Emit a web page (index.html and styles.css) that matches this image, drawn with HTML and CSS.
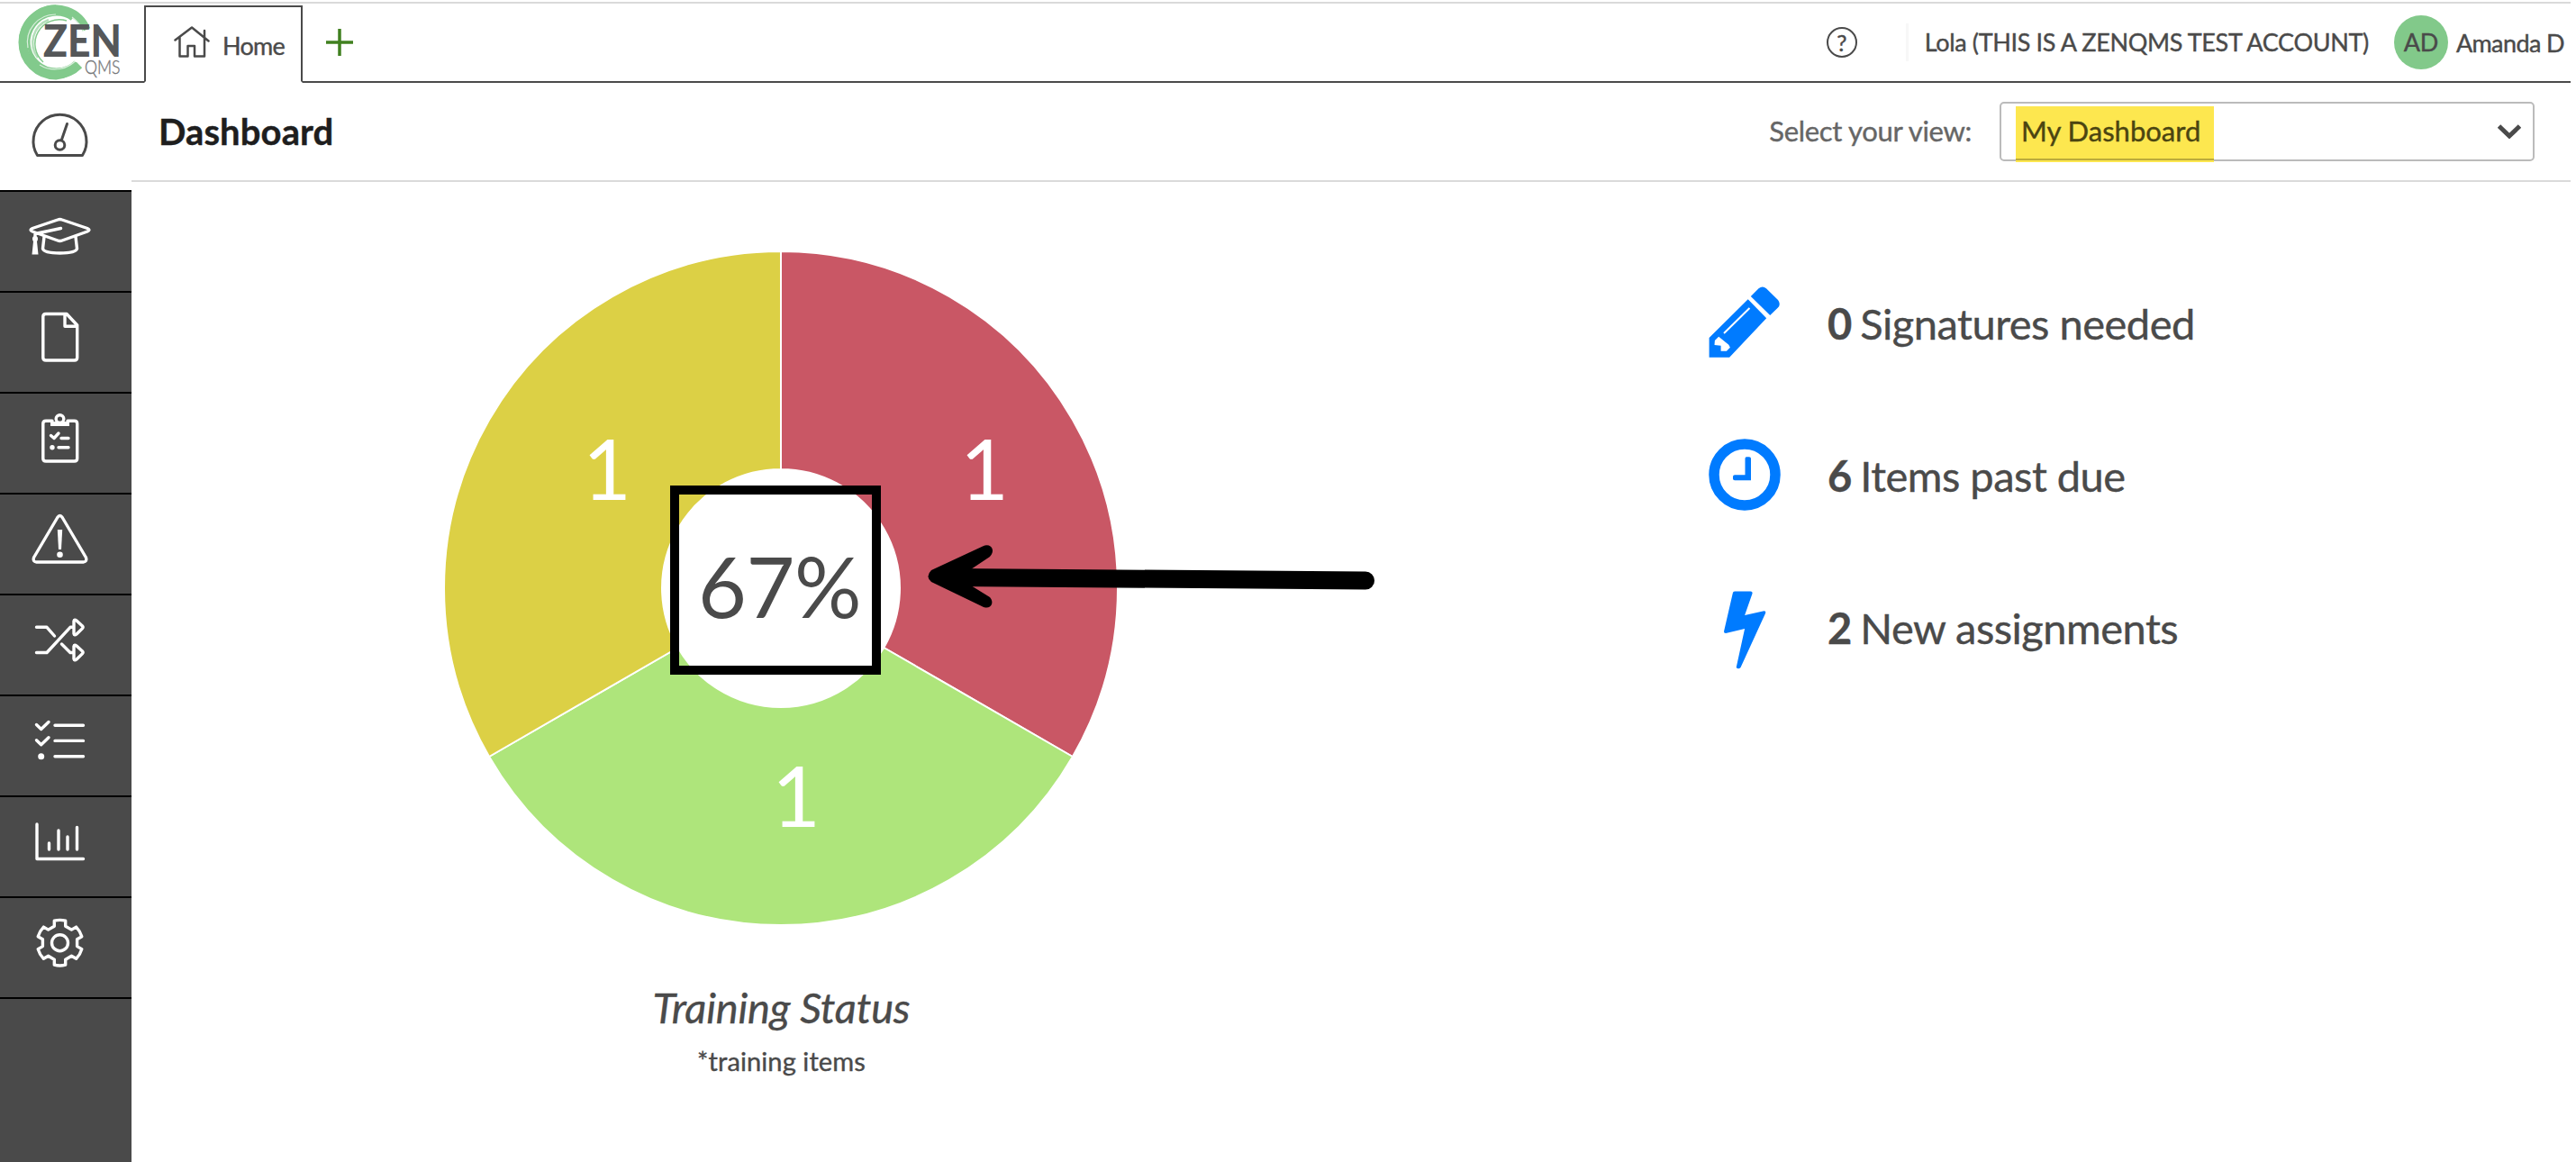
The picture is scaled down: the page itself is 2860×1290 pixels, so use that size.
FILE: index.html
```html
<!DOCTYPE html>
<html lang="en">
<head>
<meta charset="utf-8">
<title>Dashboard</title>
<link rel="stylesheet" href="styles.css">
</head>
<body>
<header class="topbar">
	<svg class="logo" viewBox="0 0 160 86">
		<path class="brush" d="M96 29A36.500 36.500 0 1 0 88 68" stroke-width="9"/>
		<path class="brush" d="M62 6A37 37 0 0 0 62 80A37 37 0 0 0 84 70" stroke-width="9"/>
		<path class="brush" d="M80 17A31 31 0 1 0 84 65" stroke-width="4"/>
		<path class="brush" d="M74 19A27 27 0 0 0 48 65" stroke-width="1.500"/>
		<path class="brush" d="M54 18A27 27 0 0 0 42 60" stroke-width="2.500" opacity=".6"/>
		<path class="brush-gap" d="M31 49A31 31 0 0 1 62 12M44 68A32 32 0 0 0 86 61M80 15Q89 22 93 31"/>
		<text class="zen" x="48" y="59" textLength="87" lengthAdjust="spacingAndGlyphs">ZEN</text>
		<text class="qms" x="94" y="78" textLength="39.500" lengthAdjust="spacingAndGlyphs">QMS</text>
	</svg>
	<div class="tab">
		<svg class="home-icon" viewBox="0 0 40 36"><path d="M1.500 15.500L20 1.500L38.500 16.500M6.500 12.500V33.500H15.500V22H23V33.500H34V12.500M34 5V12"/></svg>
		<span>Home</span>
	</div>
	<svg class="plus" viewBox="0 0 30 30"><path d="M0 15H30M15 0V30"/></svg>
	<div class="user">
		<span class="help">?</span>
		<span class="account">Lola (THIS IS A ZENQMS TEST ACCOUNT)</span>
		<span class="avatar">AD</span>
		<span class="name">Amanda D</span>
	</div>
</header>

<div class="page">
	<nav class="sidebar">
		<a class="item active">
			<svg viewBox="0 0 146 119"><path d="M41.500 80.500H91.500A29.500 29.500 0 1 0 41.500 80.500Z"/><circle cx="66.500" cy="69" r="5.300"/><path d="M68.500 63L74.500 45.500"/></svg>
		</a>
		<a class="item">
			<svg viewBox="0 0 146 110"><path d="M64 31Q66.500 30 69 31L97 40.500Q101 42.200 97 44L69 54Q66.500 55 64 54L36 44Q32 42.200 36 40.500ZM67.500 40.500L39 46.500V50M49 50L47.500 63Q49 68 66.500 68T85.500 63L84 50"/><path class="solid" d="M36 52A3 3 0 0 1 42 52Q42 54 41 55L42.500 69.500H35.500L37 55Q36 54 36 52Z"/></svg>
		</a>
		<a class="item">
			<svg viewBox="0 0 146 110"><path d="M51 23.500H74L85.700 36V72Q85.700 75 82.500 75H51Q47.800 75 47.800 72V26.500Q47.800 23.500 51 23.500ZM72 24V37.300H85"/></svg>
		</a>
		<a class="item">
			<svg viewBox="0 0 146 110"><path d="M58 30.300H51Q47.800 30.300 47.800 33.300V72Q47.800 75 51 75H82.500Q85.700 75 85.700 72V33.300Q85.700 30.300 82.500 30.300H75"/><circle cx="66.500" cy="28" r="4.300"/><path class="solid" d="M56 31H77V36H56Z"/><path d="M56.500 46.500L60 49.500L65 44M68 49.500H76M65 59.700H76"/><circle class="solid" cx="58" cy="59.700" r="2.700"/></svg>
		</a>
		<a class="item">
			<svg viewBox="0 0 146 110"><path d="M63.800 25.500Q66.500 21.500 69.200 25.500L95.500 70Q97 74.500 92.500 75H40.500Q36 74.500 37.500 70Z"/><path class="solid" d="M63.800 39H69.200L68 61H65Z"/><circle class="solid" cx="66.500" cy="66.700" r="3.300"/></svg>
		</a>
		<a class="item">
			<svg viewBox="0 0 146 110"><path d="M40.500 35.300H52L60.500 45M40.500 63.500H52L78 35.300H82M68.500 54L78 63.500H82M82 28.500Q82.500 26 85 28L91.500 34Q92.800 35.300 91.500 36.600L85 43Q82.500 45 82 42.500ZM82 56.500Q82.500 54 85 56L91.500 62Q92.800 63.300 91.500 64.600L85 71Q82.500 73 82 70.500Z"/></svg>
		</a>
		<a class="item">
			<svg viewBox="0 0 146 110"><path d="M40.500 31.500L45.700 36.500L54 28.500M40.500 48.700L45.700 53.700L54 45.700M61 32.200H92.500M61 49.400H92.500M61 66.700H92.500"/><circle class="solid" cx="45.700" cy="66.700" r="3.500"/></svg>
		</a>
		<a class="item">
			<svg viewBox="0 0 146 110"><path d="M41 30V68.500H92.500M54.500 51V58M65 37V58M75 44V58M85.500 33.500V58"/></svg>
		</a>
		<a class="item">
			<svg viewBox="0 0 146 110"><g transform="translate(66.500 49.700)"><path d="M-6.200-18.500V-24.500A25.300 25.300 0 0 1 6.200-24.500V-18.500L12.900-14.600L18.100-17.600A25.300 25.300 0 0 1 24.300-6.900L19.100-3.900V3.900L24.300 6.900A25.300 25.300 0 0 1 18.100 17.600L12.900 14.600L6.200 18.500V24.500A25.300 25.300 0 0 1-6.200 24.500V18.500L-12.900 14.600L-18.100 17.600A25.300 25.300 0 0 1-24.300 6.900L-19.100 3.900V-3.900L-24.300-6.900A25.300 25.300 0 0 1-18.100-17.600L-12.900-14.600Z"/><circle r="9"/></g></svg>
		</a>
		<div class="rest"></div>
	</nav>

	<main class="main">
		<div class="title-row">
			<h1>Dashboard</h1>
			<span class="view-label">Select your view:</span>
			<div class="select">
				<span class="selected">My Dashboard</span>
				<svg class="chevron" viewBox="0 0 26 16"><path d="M1.500 2L13 13L24.500 2"/></svg>
			</div>
		</div>
		<div class="content">
			<section class="training">
				<!-- donut, three equal slices -->
				<svg class="chart" viewBox="146 202 1443 840">
					<g class="slices">
						<path fill="#c95765" d="M867 279A374 374 0 0 1 1190.900 840L981.300 719A132 132 0 0 0 867 521Z"/>
						<path fill="#aee57b" d="M1190.900 840A374 374 0 0 1 543.100 840L752.700 719A132 132 0 0 0 981.300 719Z"/>
						<path fill="#dcd045" d="M543.100 840A374 374 0 0 1 867 279V521A132 132 0 0 0 752.700 719Z"/>
					</g>
					<g class="count">
						<text x="647" y="555">1</text>
						<text x="1066" y="555">1</text>
						<text x="857" y="918">1</text>
					</g>
					<text class="percent" x="865.500" y="686">67%</text>
					<rect class="frame" x="749" y="544" width="224" height="200"/>
					<path class="arrow" d="M1060 641L1516 644.500"/>
					<path d="M1034 633L1091 606.500C1100 602 1106 611 1099 618L1078 632V650L1099 663C1105 670 1099 678 1090 673L1034 646Q1027 640 1034 633Z"/>
				</svg>
				<div class="caption">Training Status</div>
				<div class="note">*training items</div>
			</section>
			<section class="stats">
				<div class="stat">
					<svg viewBox="0 0 80 88"><path d="M.6 57L43.700 14.300L64.200 35.300L23.100 78.700H.6ZM46.800 11L55.500 2.200Q59.900-1.200 64 2.200L77 15Q80.500 19.500 77 23.500L68.200 32Z"/><path class="cut" d="M11.200 55.700L22.300 64.700L23.900 67.700L19.900 71.700H13.600V65.700L6.500 65L6.900 60Z"/><path class="cut-line" d="M17 52L45.500 24"/></svg>
					<span><b>0</b> Signatures needed</span>
				</div>
				<div class="stat">
					<svg viewBox="0 0 80 88"><circle cx="40" cy="40" r="34" fill="none" stroke="#007bff" stroke-width="11.500"/><path d="M42 20.300H45Q47 20.300 47 22V46.300H29Q27 46.300 27 44.500V42Q27 40.300 29 40.300H40.500V22Q40.500 20.300 42 20.300Z"/></svg>
					<span><b>6</b> Items past due</span>
				</div>
				<div class="stat">
					<svg viewBox="0 0 80 88"><path d="M29 .5H46.500Q49 .5 48.500 3L40.100 27L61.500 22.300Q64 22.500 63 25L35.500 85Q33 87.500 30.700 85L40.100 42L19 47Q16.800 47 17 45L26.800 2.500Q27 .5 29 .5Z"/></svg>
					<span><b>2</b> New assignments</span>
				</div>
			</section>
		</div>
	</main>
</div>
</body>
</html>
```
FILE: styles.css
```css
* { box-sizing: border-box; }
body {
	margin: 0;
	width: 2854px;
	height: 1290px;
	display: flex;
	flex-direction: column;
	overflow: hidden;
	background: #fff;
	color: #4a4a4a;
	font-family: Lato, "Liberation Sans", sans-serif;
	-webkit-text-stroke: .4px;
}
svg { display: block; flex: none; }
svg text { -webkit-text-stroke: 0; }

/* top bar */
.topbar {
	display: flex;
	flex: none;
	height: 90px;
	margin-top: 2px;
	border-top: 2px solid #dadada;
	border-bottom: 2px solid #4a4a4a;
}
.logo { width: 160px; height: 86px; }
.brush { fill: none; stroke: #82ca8c; }
.brush-gap { fill: none; stroke: #fff; stroke-width: 1.2; opacity: .7; }
.zen { font-size: 49px; font-weight: 900; fill: #555759; }
.qms { font-size: 21px; font-weight: 300; fill: #77787a; stroke: #77787a; stroke-width: .4; }
.tab {
	display: flex;
	align-items: center;
	gap: 14px;
	width: 176px;
	height: 86px;
	margin-top: 2px;
	padding: 3px 0 0 31px;
	border: 2px solid #4a4a4a;
	border-bottom-color: #fff;
	background: #fff;
	font-size: 27px;
	letter-spacing: -.7px;
}
.home-icon {
	width: 40px;
	height: 36px;
	margin-top: -7px;
	fill: none;
	stroke: #4a4a4a;
	stroke-width: 2.5;
	stroke-linejoin: round;
	stroke-linecap: round;
}
.plus {
	width: 30px;
	height: 30px;
	margin: 28px 0 0 26px;
	stroke: #40801f;
	stroke-width: 3.5;
}
.user {
	display: flex;
	align-items: center;
	height: 86px;
	margin-left: auto;
	padding-right: 7px;
	font-size: 27px;
	letter-spacing: -.35px;
}
.help {
	width: 34px;
	height: 34px;
	border: 2px solid #4a4a4a;
	border-radius: 50%;
	font-size: 25px;
	line-height: 30px;
	text-align: center;
	margin-right: 54px;
}
.account {
	border-left: 3px solid #f7f7f7;
	padding-left: 18px;
	line-height: 42px;
}
.avatar {
	width: 60px;
	height: 60px;
	margin: 0 9px 0 28px;
	border-radius: 50%;
	background: #82c98a;
	line-height: 60px;
	text-align: center;
}
.name { letter-spacing: -.6px; }

.page { display: flex; flex: 1; }

/* left menu */
.sidebar {
	display: flex;
	flex-direction: column;
	width: 146px;
}
.item {
	height: 112px;
	border-top: 2px solid #000;
	background: #4a4a4a;
}
.item svg {
	width: 146px;
	height: 110px;
	fill: none;
	stroke: #fff;
	stroke-width: 3.4;
	stroke-linecap: round;
	stroke-linejoin: round;
}
.item .solid { fill: #fff; stroke: none; }
.active { height: 119px; border: 0; background: #fff; }
.active svg { height: 119px; stroke: #4a4a4a; stroke-width: 3; }
.rest { flex: 1; border-top: 2px solid #000; background: #4a4a4a; }

.main { flex: 1; }
.title-row {
	display: flex;
	align-items: center;
	height: 110px;
	padding: 0 40px 0 30px;
	border-bottom: 2px solid #dadada;
}
h1 {
	flex: 1;
	margin: 0;
	font-size: 40px;
	letter-spacing: .1px;
	color: #1e1e1e;
}
.view-label {
	margin: 0 31px 2px 0;
	font-size: 31px;
	letter-spacing: -.3px;
	color: #666;
}
.select {
	display: flex;
	align-items: center;
	justify-content: space-between;
	width: 594px;
	height: 66px;
	padding: 0 13px 0 16px;
	border: 2px solid #bbb;
	border-radius: 5px;
}
.selected {
	width: 220px;
	height: 62px;
	margin-bottom: -5px;
	padding-left: 6px;
	background: #fde74f;
	color: #4b4511;
	font-size: 31px;
	line-height: 54px;
	box-shadow: inset 0 -2px #fde74f, inset 0 -4px #bcab3a;
}
.chevron {
	width: 26px;
	height: 16px;
	fill: none;
	stroke: #4a4a4a;
	stroke-width: 5;
}

.content { display: flex; }
.training { width: 1443px; text-align: center; }
.chart { width: 1443px; height: 840px; }
.slices { stroke: #fff; stroke-width: 2; }
.chart text { font-size: 93px; -webkit-text-stroke: .6px; }
.count { fill: #fff; color: #fff; }
.percent { fill: #4a4a4a; text-anchor: middle; letter-spacing: -.5px; }
.frame { fill: none; stroke: #000; stroke-width: 10; }
.arrow { stroke: #000; stroke-width: 20; stroke-linecap: round; }
.caption {
	margin-top: 46px;
	font-size: 47px;
	font-style: italic;
	letter-spacing: -.2px;
	line-height: 60px;
}
.note { margin-top: 10px; font-size: 29px; letter-spacing: .1px; line-height: 40px; }

.stats { padding: 116px 0 0 308px; }
.stat {
	display: flex;
	gap: 52px;
	height: 169px;
	font-size: 47px;
	letter-spacing: -.5px;
	line-height: 83px;
}
.stat svg { width: 80px; height: 88px; fill: #007bff; }
.stat b { margin-right: -2px; }
.stat .cut { fill: #fff; }
.cut-line { stroke: #fff; stroke-width: 2; }
```
